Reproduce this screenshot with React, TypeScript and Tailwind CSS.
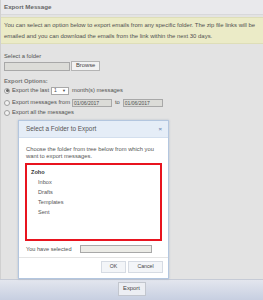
import React from 'react';

const font = { fontFamily: '"Liberation Sans", Arial, sans-serif' };

const Radio: React.FC<{ checked?: boolean }> = ({ checked }) => (
  <span className="inline-flex w-[6px] h-[6px] rounded-full border border-[#a0a0a0] bg-[#f2f2f2] items-center justify-center mr-[2px]">
    {checked && <span className="w-[3px] h-[3px] rounded-full bg-[#666]"></span>}
  </span>
);

const App: React.FC = () => {
  return (
    <div className="w-[263px] h-[300px] bg-[#e3e3e3] text-[#505050] overflow-hidden" style={font}>
      {/* main panel */}
      <div className="relative h-[279px] border-l border-[#d0d0d0]">
        <div className="h-[15px] bg-[#e9e9ec] border-b border-[#d8d8da] flex items-center px-[3px]">
          <span className="text-[6.2px] font-bold text-[#666]">Export Message</span>
        </div>

        <div className="mt-[2px] h-[27px] bg-[#ebebc7] border-y border-[#dedeb8] px-[3px] pt-[2px] text-[5.95px] leading-[10.5px] text-[#505050]">
          <p>You can select an option below to export emails from any specific folder. The zip file links will be</p>
          <p>emailed and you can download the emails from the link within the next 30 days.</p>
        </div>

        <div className="px-[3px]">
          <p className="mt-[8px] text-[5.8px] leading-[8px]">Select a folder</p>
          <div className="mt-[1px] flex items-center gap-[1px]">
            <div className="w-[66px] h-[9px] bg-[#dcdcd8] border border-[#a8a8a8]"></div>
            <button className="h-[10px] px-[4px] bg-[#f2f2f2] border border-[#b4b4b4] text-[5.8px] text-[#444] leading-none">Browse</button>
          </div>

          <p className="mt-[6px] text-[5.8px] leading-[8px] font-bold text-[#777]">Export Options:</p>
          <div className="mt-[1px] flex items-center text-[5.8px] h-[9px]">
            <Radio checked />
            <span>Export the last</span>
            <span className="ml-[2px] w-[18px] h-[8px] bg-white border border-[#a8a8a8] flex items-center justify-between px-[2px] text-[5px]">
              <span>1</span>
              <span className="text-[4px]">▼</span>
            </span>
            <span className="ml-[3px]">month(s) messages</span>
          </div>
          <div className="mt-[3px] flex items-center text-[5.8px] h-[9px]">
            <Radio />
            <span>Export messages from</span>
            <span className="ml-[2px] w-[40px] h-[8px] bg-[#dcdcd8] border border-[#a8a8a8] text-[5px] leading-[6px] px-[1px]">01/06/2017</span>
            <span className="mx-[3px]">to</span>
            <span className="w-[40px] h-[8px] bg-[#dcdcd8] border border-[#a8a8a8] text-[5px] leading-[6px] px-[1px]">01/06/2017</span>
          </div>
          <div className="mt-[1px] flex items-center text-[5.8px] h-[9px]">
            <Radio />
            <span>Export all the messages</span>
          </div>
        </div>

        {/* modal dialog */}
        <div className="absolute left-[17px] top-[120px] w-[151px] h-[159px] bg-white border border-[#b3c6df] shadow-[0_0_2px_rgba(120,140,170,0.4)] flex flex-col">
          <div className="h-[17px] shrink-0 bg-[#e5edf7] border-b border-[#d3dfee] flex items-center justify-between pl-[7px] pr-[6px]">
            <span className="text-[6.4px] text-[#555]">Select a Folder to Export</span>
            <span className="text-[6px] text-[#7a92b8] font-bold">×</span>
          </div>
          <div className="px-[7px] pt-[8px] text-[5.8px] leading-[6.5px] text-[#555]">
            <p>Choose the folder from tree below from which you</p>
            <p>want to export messages.</p>
          </div>
          <div className="mx-[6px] mt-[4px] h-[78px] shrink-0 border-2 border-[#e8141f] px-[4px] pt-[2px] text-[5.6px] leading-[10px] text-[#555]">
            <p className="font-bold text-[#333]">Zoho</p>
            <div className="pl-[7px]">
              <p>Inbox</p>
              <p>Drafts</p>
              <p>Templates</p>
              <p>Sent</p>
            </div>
          </div>
          <div className="mt-[4px] px-[7px] flex items-center text-[5.6px] h-[8px]">
            <span className="w-[54px]">You have selected</span>
            <span className="w-[72px] h-[8px] bg-[#ebebe6] border border-[#a8a8a8]"></span>
          </div>
          <div className="mt-[4px] border-t border-[#e4e4e4] flex justify-end gap-[2px] px-[5px] pt-[3px]">
            <button className="w-[25px] h-[12px] bg-[#f3f5f8] border border-[#d6dbe3] text-[5.2px] text-[#444]">OK</button>
            <button className="w-[35px] h-[12px] bg-[#f3f5f8] border border-[#d6dbe3] text-[5.2px] text-[#444]">Cancel</button>
          </div>
        </div>
      </div>

      {/* footer */}
      <div className="h-[21px] border-t border-[#c6cbd6] bg-gradient-to-b from-[#e3e6ee] to-[#c7cfe1] flex justify-center pt-[2px]">
        <button className="h-[14px] w-[28px] bg-[#eceef3] border border-[#c2c6ce] text-[5.8px] text-[#444] leading-none">Export</button>
      </div>
    </div>
  );
};

export default App;
